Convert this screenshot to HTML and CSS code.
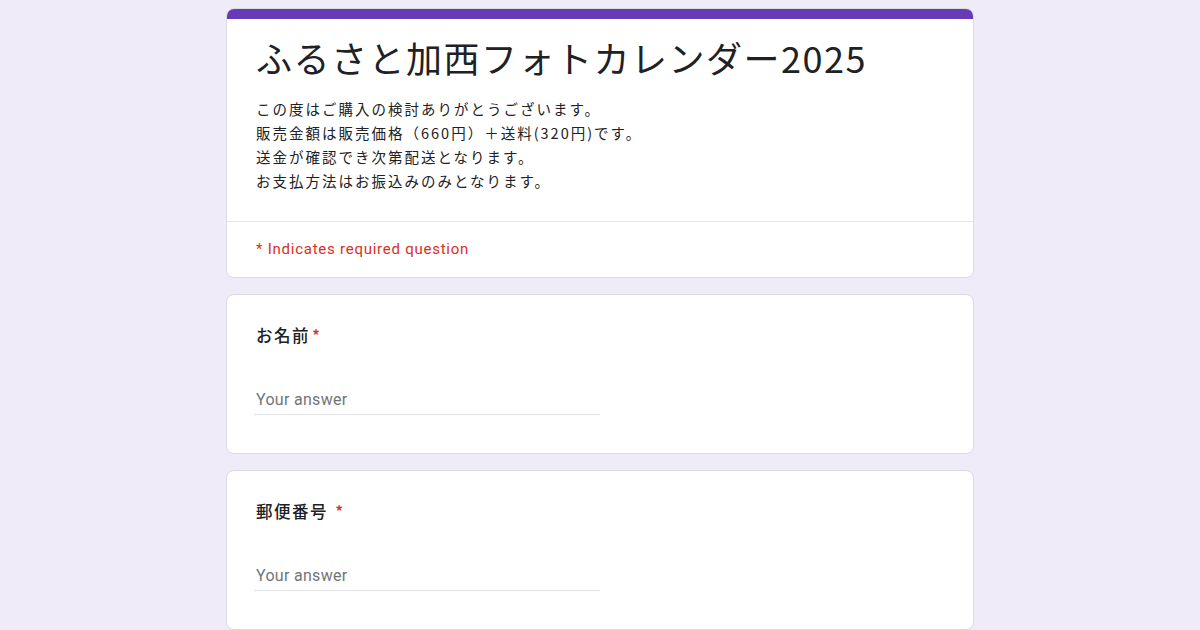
FILE: index.html
```html
<!DOCTYPE html>
<html lang="ja">
<head>
<meta charset="utf-8">
<title>ふるさと加西フォトカレンダー2025</title>
<link rel="stylesheet" href="styles.css">
</head>
<body>
<main class="page">
  <section class="card header-card">
    <div class="accent"></div>
    <div class="head">
      <h1 class="title">ふるさと加西フォトカレンダー2025</h1>
      <div class="desc">
        <p>この度はご購入の検討ありがとうございます。</p>
        <p>販売金額は販売価格（660円）＋送料(320円)です。</p>
        <p>送金が確認でき次第配送となります。</p>
        <p>お支払方法はお振込みのみとなります。</p>
      </div>
    </div>
    <div class="required-note">* Indicates required question</div>
  </section>

  <section class="card question">
    <div class="q-label">お名前<span class="star">*</span></div>
    <div class="answer"><span class="placeholder">Your answer</span></div>
  </section>

  <section class="card question">
    <div class="q-label">郵便番号 <span class="star">*</span></div>
    <div class="answer"><span class="placeholder">Your answer</span></div>
  </section>
</main>
</body>
</html>
```

FILE: styles.css
```css
* { box-sizing: border-box; }

html, body {
  margin: 0;
  padding: 0;
  background: #f0ebf8;
}

body {
  font-family: Roboto, "Noto Sans CJK JP", sans-serif;
  color: #202124;
  padding-top: 8px;
  height: 630px;
  overflow: hidden;
}

.page {
  width: 748px;
  margin: 0 auto;
  display: flex;
  flex-direction: column;
  gap: 16px;
}

.card {
  background: #fff;
  border: 1px solid #dadce0;
  border-radius: 8px;
}

.header-card {
  overflow: hidden;
}

.accent {
  height: 11px;
  background: #673ab7;
  margin: -1px -1px 0;
}

.head {
  padding: 14px 29px 28px;
  border-bottom: 1px solid #e6e6e9;
}

.title {
  margin: 0;
  font-family: "Noto Sans CJK JP", sans-serif;
  font-weight: 400;
  font-size: 36px;
  line-height: 48px;
  letter-spacing: 1.5px;
  color: #202124;
}

.desc {
  margin-top: 16px;
  font-family: "Noto Sans CJK JP", sans-serif;
  font-size: 14.5px;
  line-height: 24px;
  letter-spacing: 2px;
  color: #202124;
}

.desc p { margin: 0; }

.required-note {
  padding: 17px 29px 18px;
  font-family: Roboto, sans-serif;
  font-size: 15px;
  line-height: 20px;
  letter-spacing: 0.75px;
  color: #d93025;
}

.question {
  padding: 28px 29px 38px;
}

.q-label {
  font-family: "Noto Sans CJK JP", sans-serif;
  font-size: 16.5px;
  line-height: 24px;
  letter-spacing: 1.5px;
  font-weight: 500;
  color: #202124;
}

.star {
  color: #d93025;
  margin-left: 2px;
}

.answer {
  margin-top: 41px;
  width: 346px;
  margin-left: -2px;
  padding-left: 2px;
  padding-bottom: 2px;
  border-bottom: 1px solid #e4e4e6;
}

.placeholder {
  display: block;
  font-family: Roboto, sans-serif;
  font-size: 16px;
  line-height: 24px;
  letter-spacing: 0.3px;
  color: #70757a;
}
```
